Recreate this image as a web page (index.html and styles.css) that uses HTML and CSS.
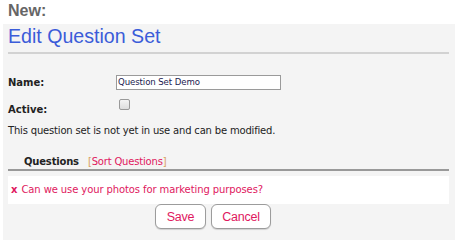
FILE: index.html
```html
<!DOCTYPE html>
<html>
<head>
<meta charset="utf-8">
<link rel="stylesheet" href="styles.css">
</head>
<body>
<div class="new">New:</div>
<div class="panel">
  <h1 class="title">Edit Question Set</h1>
  <div class="form">
    <div class="row row-name">
      <label class="label">Name:</label>
      <input class="input" type="text" value="Question Set Demo">
    </div>
    <div class="row row-active">
      <label class="label">Active:</label>
      <span class="checkbox"></span>
    </div>
    <p class="note">This question set is not yet in use and can be modified.</p>
  </div>
  <div class="tabs">
    <span class="tab">Questions</span>
    <span class="sort"><span class="br">[</span>Sort Questions<span class="br">]</span></span>
  </div>
  <div class="qrow"><span class="x">x</span> Can we use your photos for marketing purposes?</div>
  <div class="buttons">
    <button class="btn btn-save">Save</button>
    <button class="btn btn-cancel">Cancel</button>
  </div>
</div>
</body>
</html>
```
FILE: styles.css
```css
html, body { margin: 0; padding: 0; background: #fff; }
body { font-family: "DejaVu Sans", Verdana, sans-serif; font-size: 10px; color: #222; }
.new { font-family: "Liberation Sans", Arial, sans-serif; font-weight: bold; font-size: 16px; color: #666; padding: 2px 0 0 8px; height: 24px; box-sizing: border-box; line-height: 18px; }
.panel { margin-left: 3px; background: #f4f4f4; padding: 0 6px 20px 5px; height: 216px; box-sizing: border-box; }
.title { margin: 0; font-family: "Liberation Sans", Arial, sans-serif; font-weight: normal; font-size: 19.6px; color: #3b5cd9; line-height: 22px; padding-top: 1px; height: 30px; box-sizing: border-box; border-bottom: 2px solid #d2d2d2; }
.form { padding-top: 20px; }
.row { display: flex; align-items: center; }
.label { width: 108px; font-weight: bold; font-size: 10px; }
.row-name { height: 16px; }
.input { width: 165px; height: 15px; box-sizing: border-box; border: 1px solid #9a9a9a; padding: 0 1px; font-family: "DejaVu Sans", Verdana, sans-serif; font-size: 8.6px; letter-spacing: -0.1px; color: #1a1a50; background: #fff; margin: 0; }
.row-active { margin-top: 13px; height: 12px; }
.checkbox { display: inline-block; width: 9px; height: 9px; border: 1px solid #999; border-radius: 2px; background: linear-gradient(#f4f4f4, #ddd); margin-left: 3px; margin-top: -9px; }
.note { margin: 10px 0 0; font-size: 10px; line-height: 12px; letter-spacing: -0.18px; }
.tabs { margin-top: 19px; border-bottom: 2px solid #999; padding-left: 16px; height: 15px; box-sizing: border-box; display: flex; align-items: flex-start; font-size: 10px; line-height: 12px; letter-spacing: -0.18px; }
.tab { font-weight: bold; color: #222; margin-right: 9px; }
.sort { color: #e0185e; }
.br { color: #d8a060; }
.qrow { margin-top: 5px; background: #fff; height: 28px; line-height: 28px; padding-left: 3px; color: #e0185e; font-size: 10px; letter-spacing: -0.1px; }
.x { font-weight: bold; margin-right: 1px; }
.buttons { display: flex; gap: 5px; padding-left: 147px; }
.btn { height: 25px; border: 1px solid #9c9c9c; border-radius: 6px; background: #fff; box-shadow: 0 1px 1px rgba(0,0,0,0.15); font-family: "Liberation Sans", Arial, sans-serif; font-size: 12.5px; letter-spacing: -0.2px; color: #e0185e; padding: 0; margin: 0; }
.btn-save { width: 51px; }
.btn-cancel { width: 60px; }
```
